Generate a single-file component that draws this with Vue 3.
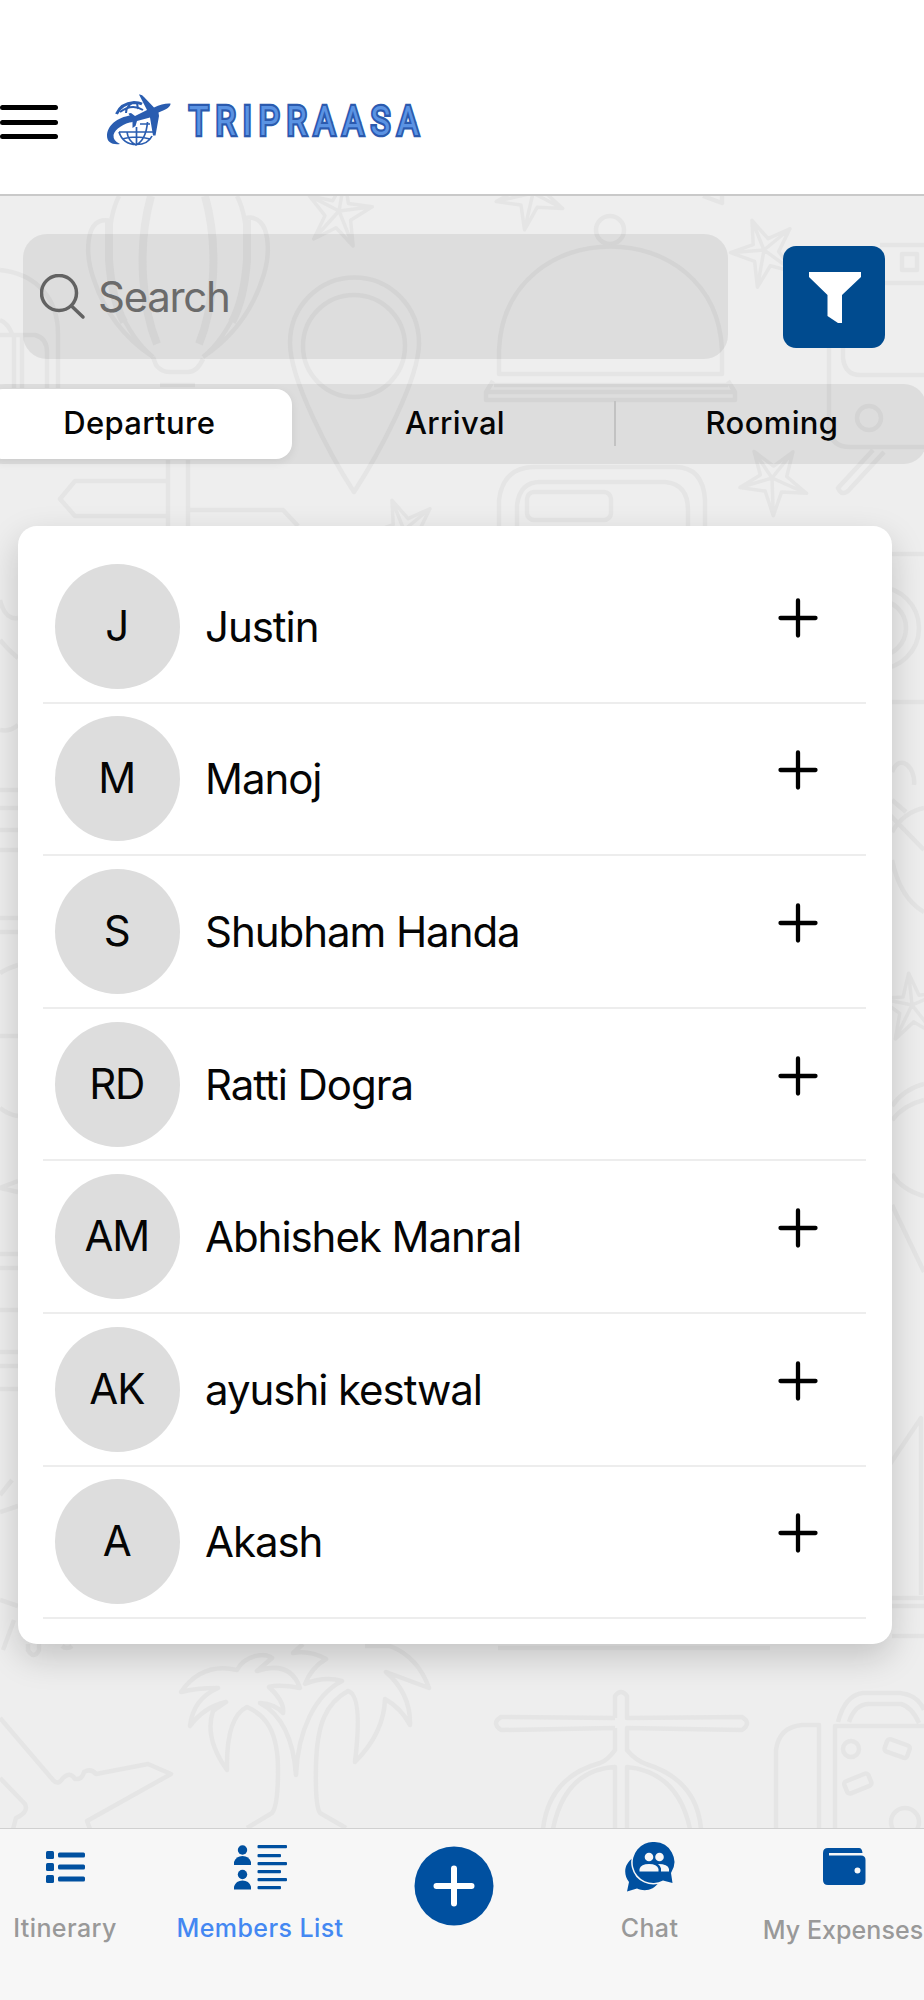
<template>
  <div class="screen">
    <!-- Travel doodles behind the content -->
    <svg class="doodles" viewBox="0 0 924 2000" aria-hidden="true">
      <defs>
        <path id="star" d="M0-32 8-9 32-10 13 7 20 32 0 17-20 32-13 7-32-10-8-9ZM0 0V-32M0 0 32-10M0 0 20 32M0 0-20 32M0 0-32-10" />
      </defs>
      <!-- balloon -->
      <path d="M119 196C104 225 108 283 118 307Q133 341 153 357M111 221C84 214 85 255 94 280C108 322 135 345 153 357M237 196C252 225 248 283 238 307Q223 341 203 357M245 218C272 213 271 255 262 280C248 322 221 345 203 357" />
      <path class="thick" d="M151 196C136 250 143 310 157 344M205 196C220 250 213 310 199 344M109 220V260Q112 300 124 322M247 220V260Q244 300 232 322" />
      <path d="M153 357 156 365Q161 372 170 372H188Q197 372 203 359M160 385H195" />
      <!-- luggage at the left edge -->
      <path d="M0 270C38 274 58 300 58 334V388M0 335H35Q47 338 47 352V388M14 335V388M22 335V388M0 320Q8 323 12 334" />
      <!-- map pin -->
      <path d="M354 492C330 455 290 380 290 343A64 65 0 0 1 419 343C419 380 378 455 354 492Z" />
      <circle cx="354" cy="346" r="51" />
      <!-- signpost -->
      <path d="M168 460V530M188 460V530M166 481H75L60 499 75 516H166M190 510H283L298 526" />
      <!-- serving dome -->
      <circle cx="610" cy="230" r="14" />
      <path d="M499 374V350C505 212 716 212 722 350V374ZM494 385H728M486 392 493 381M735 392 728 381M486 392V400H735V392Z" />
      <!-- train -->
      <path d="M829 346V430Q832 447 850 447H924M843 346V358Q845 375 860 375H924M880 245H924M880 283H924M902 254H917V270H902ZM873 450 838 488Q842 497 849 490L884 452" />
      <circle cx="869" cy="418" r="12" />
      <path d="M499 530V500Q503 467 535 467H675Q703 467 705 500V530M517 530V505Q520 482 540 482H665Q688 484 688 510V530" />
      <rect x="527" y="492" width="84" height="28" rx="7" />
      <!-- stars -->
      <use href="#star" transform="translate(339 211) rotate(10)" />
      <use href="#star" transform="translate(533 193) rotate(45)" />
      <use href="#star" transform="translate(764 250) rotate(-22)" />
      <use href="#star" transform="translate(772 478) rotate(-34)" />
      <use href="#star" transform="translate(404 530) rotate(-22)" />
      <use href="#star" transform="translate(912 1005) rotate(-6)" />
      <path d="M703 196 722 203V196" />
      <!-- right edge -->
      <path d="M892 554H924M892 702H924M892 772C900 752 916 768 914 785M890 815 924 850M892 800 906 812M892 860C898 888 910 904 924 912M892 832Q904 812 924 808" />
      <circle cx="878" cy="628" r="41" />
      <circle cx="878" cy="628" r="28" />
      <path d="M892 1106Q904 1089 924 1084M892 1120Q904 1105 924 1100M892 1174Q902 1190 924 1196M892 1205 924 1272M890 1464 921 1418V1595M892 1598H924M892 1606H924M892 1636H924" />
      <!-- left edge -->
      <path d="M0 600Q5 620 18 618M0 640Q8 650 18 658M0 730Q10 732 18 725M0 790H18M0 808H18M0 830H18M0 850H18M0 918H18M0 932H18M0 973Q8 968 18 965M0 1036H18M0 1108Q9 1115 18 1116M18 1181 0 1188 18 1192M0 1254H18M0 1268H18M0 1310H18M0 1352H18M0 1366H18M0 1389H18M0 1495 12 1480M0 1512 18 1506M0 1600 18 1606" />
      <path d="M3 1650 14 1620M28 1644V1650Q34 1660 39 1650V1644M62 1646Q67 1650 72 1646M498 1648H770" />
      <!-- plane -->
      <path d="M0 1718 53 1780Q58 1786 63 1778 70 1771 75 1779 82 1780 84 1772 91 1768 96 1774L148 1764 171 1774 87 1821 90 1829M0 1778 25 1804Q29 1812 16 1818L13 1829" />
      <!-- palms -->
      <path d="M247 1828 272 1813Q278 1806 278 1770C278 1730 265 1715 247 1707Q226 1717 227 1770Q204 1738 213 1711L226 1702Q204 1707 190 1726Q193 1699 218 1688Q196 1688 181 1692Q202 1662 237 1670C245 1655 265 1652 272 1658L257 1671Q290 1660 300 1688Q279 1684 269 1687Q285 1702 283 1713Q275 1704 260 1703Q292 1720 296 1775C298 1730 315 1695 342 1681Q324 1676 305 1684Q311 1668 326 1659Q310 1650 293 1653L303 1644" />
      <path d="M346 1828 320 1813Q315 1806 316 1765C317 1724 326 1703 348 1691Q363 1695 355 1762Q384 1733 385 1699Q401 1708 410 1725Q411 1694 386 1672L429 1688Q418 1657 390 1646H365" />
      <!-- helicopter -->
      <path d="M615 1718V1696Q621 1688 627 1696V1718L742 1717Q752 1723 742 1730L627 1728V1750Q635 1760 646 1764Q697 1780 701 1829M615 1728 501 1730Q491 1723 501 1717L615 1718M615 1728V1750Q608 1760 600 1763Q549 1777 543 1829M553 1829Q565 1770 615 1767V1829M627 1829V1767Q678 1772 690 1829" />
      <!-- travel bags -->
      <path d="M776 1829V1750Q779 1727 802 1725H819V1829M835 1829V1726H924M838 1722Q845 1695 863 1693H900Q918 1695 924 1710M849 1722Q855 1704 869 1704H901Q912 1707 919 1723" />
      <circle cx="851" cy="1749" r="8" />
      <circle cx="905" cy="1822" r="14" />
      <rect x="885" y="1742" width="24" height="13" rx="3" transform="rotate(20 897 1749)" />
      <rect x="845" y="1777" width="26" height="13" rx="3" transform="rotate(-22 858 1784)" />
    </svg>

    <header class="topbar">
      <button class="menu" aria-label="Menu">
        <span></span>
        <span></span>
        <span></span>
      </button>
      <svg class="brand" viewBox="0 0 330 70" role="img" aria-label="TRIPRAASA">
        <g fill="#2a5db0">
          <path d="M39 9.500Q42 9 44 12L54 22.500Q63 18 70.500 18.500C71 22 65 25 58.500 27.500L59 31 55.500 50.500 53 50.500 50 32.500 37 36 35.500 41 32.500 43 32.500 36.500 28.500 28.500 31 28 35 31 47 25Z" />
          <path d="M31 30.500 33 37C24 38 15 44 13.500 50Q13 56 20 59C12 60 7 57 7 51C7 41 17 32 31 30.500Z" />
        </g>
        <g fill="none" stroke="#2a5db0">
          <path d="M16.500 29Q21 18.500 34 17.500Q39 17.500 42 19" stroke-width="3" />
          <path d="M20 27Q32 18 43 25M32 18Q26 22 26 28M37 18 38 24" stroke-width="2" />
          <path d="M19 47Q23 59.500 36.500 59.500Q48 59.500 52 51M19 47H55M36.500 42V60M27 47Q28 56 36 60Q46 55 47.500 37M22 54Q36 50 50 54M40 39H50" stroke-width="1.700" />
        </g>
        <text class="brand-name" transform="translate(89 49.500) scale(.8 1)" textLength="287" lengthAdjust="spacing">TRIPRAASA</text>
      </svg>
    </header>

    <main class="content">
      <div class="search-row">
        <label class="search">
          <svg class="search-icon" viewBox="0 0 46 46">
            <circle cx="19" cy="19" r="17.500" />
            <path d="M31.500 32 43 43" />
          </svg>
          <span>Search</span>
        </label>
        <button class="filter" aria-label="Filter">
          <svg viewBox="0 0 52 52">
            <path d="M0 0H52V5L33 23V51H29L18.500 44V23L0 5Z" />
          </svg>
        </button>
      </div>

      <nav class="segments">
        <button
          v-for="tab in tabs"
          :key="tab"
          class="segment"
          :class="{ selected: tab === activeTab }"
          @click="activeTab = tab"
        >
          {{ tab }}
        </button>
      </nav>

      <section class="members">
        <div v-for="member in members" :key="member.name" class="member">
          <div class="avatar">{{ member.initials }}</div>
          <span class="name">{{ member.name }}</span>
          <svg class="add" viewBox="0 0 40 40">
            <path d="M20 2.500V37.500M2.500 20H37.500" />
          </svg>
        </div>
      </section>
    </main>

    <footer class="tabbar">
      <div class="tab itinerary">
        <svg viewBox="0 0 39 32" width="39" height="32">
          <rect v-for="y in [0, 12, 24]" :key="y" :y="y" width="8" height="8" rx="1.500" />
          <rect v-for="y in [1.5, 13.5, 25.5]" :key="'l' + y" x="12" :y="y" width="27" height="5" rx="1.500" />
        </svg>
        <span>Itinerary</span>
      </div>
      <div class="tab list active">
        <svg viewBox="0 0 53 45" width="53" height="45">
          <circle cx="8.500" cy="5" r="4.700" />
          <path d="M0 20V17Q2 11 8.500 11T17 17V20Z" />
          <circle cx="8.500" cy="29.500" r="4.700" />
          <path d="M0 44.500V41.500Q2 35.500 8.500 35.500T17 41.500V44.500Z" />
          <rect v-for="(y, i) in [0, 9, 17, 25, 33, 41]" :key="y" x="23.500" :y="y" :width="i % 2 ? 23.500 : 29.500" height="3.300" rx="1" />
        </svg>
        <span>Members List</span>
      </div>
      <div class="tab create">
        <svg viewBox="0 0 80 80" width="80" height="80">
          <circle cx="40" cy="40" r="39.500" />
          <path d="M40 22.500V57.500M22.500 40H57.500" fill="none" stroke="#fff" stroke-width="6" stroke-linecap="round" />
        </svg>
      </div>
      <div class="tab chat">
        <!-- front bubble is outlined in the bar colour to cut it out of the back one -->
        <svg viewBox="0 0 50 50" width="50" height="50">
          <path d="M8 16C-1 22-2 32 4 40L2 49.500 12 46.500C20 50 29 48 34 40Z" />
          <path d="M29 0A20 20 0 0 1 46 31L47.500 41 38 38.500A20.500 20.500 0 1 1 29 0Z" stroke="#f7f7f7" stroke-width="3" paint-order="stroke" />
          <g fill="#f7f7f7">
            <circle cx="24" cy="15" r="4.300" />
            <circle cx="34.500" cy="15" r="4.300" />
            <path d="M14.500 29.500V27Q16 22 24 22T33.500 27V29.500Z" />
            <path d="M33 22Q43 22 44 27V29.500H36V26.500Q35.500 24 33 22Z" />
          </g>
        </svg>
        <span>Chat</span>
      </div>
      <div class="tab expenses">
        <svg viewBox="0 0 43 37" width="43" height="37">
          <path fill-rule="evenodd" d="M5 0H36Q39 0 39.500 5H6V7.500H38Q42.500 7.500 42.500 12V32.500Q42.500 37 38 37H5Q0 37 0 32V5Q0 0 5 0ZM34.500 19.500A3 3 0 1 0 34.500 25.500A3 3 0 1 0 34.500 19.500Z" />
        </svg>
        <span>My Expenses</span>
      </div>
    </footer>
  </div>
</template>

<script setup>
import { ref } from 'vue'

const tabs = ['Departure', 'Arrival', 'Rooming']
const activeTab = ref('Departure')

const members = [
  { initials: 'J', name: 'Justin' },
  { initials: 'M', name: 'Manoj' },
  { initials: 'S', name: 'Shubham Handa' },
  { initials: 'RD', name: 'Ratti Dogra' },
  { initials: 'AM', name: 'Abhishek Manral' },
  { initials: 'AK', name: 'ayushi kestwal' },
  { initials: 'A', name: 'Akash' }
]
</script>

<style>
body {
  margin: 0;
  background: #eee;
}
</style>

<style scoped>
.screen {
  position: relative;
  display: flex;
  flex-direction: column;
  width: 924px;
  height: 2000px;
  overflow: hidden;
  background: #eee;
  color: #050505;
  font-family: Inter, Roboto, sans-serif;
}

button {
  padding: 0;
  border: 0;
  background: none;
  color: inherit;
  font: inherit;
  letter-spacing: inherit;
}

.doodles {
  position: absolute;
  inset: 0;
  width: 924px;
  height: 2000px;
  fill: none;
  stroke: #e5e5e5;
  stroke-width: 4.5;
  stroke-linejoin: round;
}

.doodles .thick {
  stroke-width: 8;
}

.doodles use {
  stroke-width: 3.5;
}

.topbar {
  position: relative;
  box-sizing: border-box;
  display: flex;
  align-items: flex-start;
  height: 196px;
  padding-top: 85px;
  border-bottom: 2px solid #c9c9c9;
  background: #fff;
}

.menu {
  display: flex;
  flex-direction: column;
  gap: 9.5px;
  width: 58px;
  padding-top: 20px;
}

.menu span {
  height: 5px;
  border-radius: 3px;
  background: #000;
}

.brand {
  width: 330px;
  height: 70px;
  margin-left: 42px;
}

.brand-name {
  font-family: Roboto, sans-serif;
  font-size: 41px;
  font-weight: 400;
  fill: #5b93e3;
  stroke: #2b5aae;
  stroke-width: 4.6;
  paint-order: stroke;
}

.content {
  position: relative;
  flex: 1;
  padding-top: 38px;
}

.search-row {
  display: flex;
  align-items: center;
  gap: 55px;
  padding-left: 23px;
}

.search {
  box-sizing: border-box;
  display: flex;
  align-items: center;
  width: 705px;
  height: 125px;
  padding-left: 17px;
  border-radius: 24px;
  background: rgba(0, 0, 0, 0.072);
  color: #6b6b6b;
  font-size: 42px;
  letter-spacing: -1.3px;
}

.search span {
  padding-bottom: 1px;
}

.search-icon {
  width: 46px;
  height: 46px;
  margin-right: 12px;
  fill: none;
  stroke: #626262;
  stroke-width: 3.5;
  stroke-linecap: round;
}

.filter {
  display: flex;
  align-items: center;
  justify-content: center;
  box-sizing: border-box;
  width: 102px;
  height: 102px;
  padding: 3px 0 0 2px;
  border-radius: 13px;
  background: #004b8f;
}

.filter svg {
  width: 52px;
  height: 52px;
  fill: #fff;
}

.segments {
  box-sizing: border-box;
  display: flex;
  width: 944px;
  height: 80px;
  margin: 25px 0 0 -18px;
  padding: 5px;
  border-radius: 22px;
  background: rgba(0, 0, 0, 0.072);
  font-size: 31px;
  font-weight: 450;
  letter-spacing: 0.35px;
}

.segment {
  flex: none;
  box-sizing: border-box;
  width: 304.5px;
  height: 70px;
  padding-bottom: 4px;
}

.segment:nth-child(2) {
  width: 322px;
  padding-left: 5px;
}

.segment:nth-child(3) {
  width: 317px;
  background: linear-gradient(#c2c2c2, #c2c2c2) 0 12px / 2px 45px no-repeat;
}

.selected {
  border-radius: 16px;
  background: #fff;
  box-shadow: 0 3px 10px rgba(0, 0, 0, 0.08);
}

.members {
  box-sizing: border-box;
  width: 874px;
  height: 1118px;
  margin: 62px 0 0 17.5px;
  padding: 25px 25.5px 0;
  border-radius: 19px;
  background: #fff;
  box-shadow: 0 13px 34px rgba(0, 0, 0, 0.18);
}

.member {
  box-sizing: border-box;
  display: flex;
  align-items: center;
  height: 152.6px;
  padding: 0 48px 0 12px;
  border-bottom: 2px solid #ededed;
}

.avatar {
  flex: none;
  box-sizing: border-box;
  width: 125px;
  height: 125px;
  border-radius: 50%;
  background: #ddd;
  font-size: 42px;
  line-height: 124px;
  letter-spacing: -1.1px;
  text-align: center;
  text-indent: -1.5px;
}

.name {
  flex: 1;
  margin-left: 25px;
  font-size: 42px;
  letter-spacing: -1.05px;
}

.add {
  width: 40px;
  height: 40px;
  margin-top: -17px;
  fill: none;
  stroke: #000;
  stroke-width: 4.3;
  stroke-linecap: round;
}

.tabbar {
  position: relative;
  box-sizing: border-box;
  display: flex;
  height: 172px;
  border-top: 1.5px solid #d0d0d0;
  background: #f7f7f7;
  color: #999;
  font-size: 25px;
  font-weight: 450;
  letter-spacing: 0.4px;
  line-height: 30px;
  white-space: nowrap;
}

.tab {
  flex: none;
  display: grid;
  grid-template-rows: 84px 30px;
  justify-items: center;
  align-content: start;
}

.tab svg {
  fill: #0050a0;
}

.itinerary {
  width: 130px;
}

.itinerary svg {
  margin-top: 22px;
}

.list {
  width: 260px;
}

.list svg {
  margin-top: 16px;
}

.active {
  color: #4488f2;
}

.create {
  width: 128px;
}

.create svg {
  margin-top: 17px;
}

.chat {
  width: 263px;
  margin-right: -18px;
}

.chat svg {
  margin-top: 13px;
}

.expenses {
  width: 160px;
  grid-template-rows: 86px 30px;
  grid-template-columns: 160px;
  letter-spacing: 0.05px;
}

.expenses svg {
  margin: 19px 0 0 2px;
}
</style>
